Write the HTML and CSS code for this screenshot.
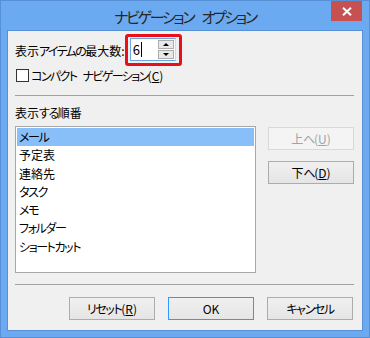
FILE: index.html
```html
<!DOCTYPE html>
<html lang="ja">
<head>
<meta charset="utf-8">
<title>ナビゲーション オプション</title>
<link rel="stylesheet" href="styles.css">
</head>
<body>
<div class="frame">
  <div class="titlebar">
    <div class="title">ナビゲーション オプション</div>
    <div class="close">
      <svg width="10" height="9" viewBox="0 0 10 9"><path d="M1 0.8 L9 8.2 M9 0.8 L1 8.2" stroke="#fff" stroke-width="2" fill="none"/></svg>
    </div>
  </div>
  <div class="client">
    <div class="row-max">
      <span class="label"><span class="k">表示</span>アイテムの<span class="k">最大数:</span></span>
      <div class="highlight">
        <div class="spin">
          <div class="spin-value">6<span class="caret"></span></div>
          <div class="spin-buttons">
            <div class="spin-btn"><span class="tri-up"></span></div>
            <div class="spin-btn"><span class="tri-down"></span></div>
          </div>
        </div>
      </div>
    </div>
    <div class="row-check">
      <span class="checkbox"></span>
      <span class="check-label">コンパクト ナビゲーション<span class="k">(<u>C</u>)</span></span>
    </div>
    <div class="sep sep-top"></div>
    <div class="order-label"><span class="k">表示</span>する<span class="k">順番</span></div>
    <div class="order-row">
      <ul class="list">
        <li class="selected">メール</li>
        <li class="k">予定表</li>
        <li class="k">連絡先</li>
        <li>タスク</li>
        <li>メモ</li>
        <li>フォルダー</li>
        <li>ショートカット</li>
      </ul>
      <div class="side-buttons">
        <div class="btn disabled"><span class="k">上</span>へ<span class="k">(<u>U</u>)</span></div>
        <div class="btn"><span class="k">下</span>へ<span class="k">(<u>D</u>)</span></div>
      </div>
    </div>
    <div class="sep sep-bottom"></div>
    <div class="footer">
      <div class="btn">リセット<span class="k">(<u>R</u>)</span></div>
      <div class="btn default"><span class="k">OK</span></div>
      <div class="btn">キャンセル</div>
    </div>
  </div>
</div>
</body>
</html>
```
FILE: styles.css
```css
html, body {
  margin: 0;
  padding: 0;
}
body {
  width: 370px;
  height: 338px;
  overflow: hidden;
  font-family: "Noto Sans CJK JP", "Noto Sans", sans-serif;
  font-feature-settings: "palt" 1;
  font-size: 12px;
  letter-spacing: -1.4px;
  color: #000;
}
.k {
  letter-spacing: 0;
}
.frame {
  box-sizing: border-box;
  width: 370px;
  height: 338px;
  background: #6baaf0;
  border: 1px solid #5890d6;
  display: flex;
  flex-direction: column;
}
.titlebar {
  height: 30px;
  display: grid;
  grid-template-columns: 1fr auto 1fr;
  padding: 0 7px;
}
.title {
  grid-column: 2;
  align-self: center;
  font-size: 15px;
  letter-spacing: -2.3px;
  word-spacing: 7px;
  line-height: 20px;
  color: #262626;
  padding-top: 1px;
}
.close {
  grid-column: 3;
  justify-self: end;
  align-self: start;
  width: 31px;
  height: 20px;
  background: #c75050;
  display: flex;
  align-items: center;
  justify-content: center;
}
.client {
  flex: 1;
  margin: 0 7px 7px 7px;
  background: #f0f0f0;
  box-shadow: 0 0 0 1px #5890d6;
  padding: 3px 8px 0 7px;
  display: flex;
  flex-direction: column;
}
.row-max {
  display: flex;
  align-items: center;
  height: 32px;
}
.label {
  line-height: 16px;
  padding-top: 1px;
  margin-right: 0;
  letter-spacing: -1.6px;
}
.highlight {
  width: 57px;
  height: 32px;
  box-sizing: border-box;
  border: 3px solid #e8101a;
  border-radius: 3px;
  padding: 1px 0 0 2px;
}
.spin {
  box-sizing: border-box;
  width: 46px;
  height: 23px;
  border: 1px solid #6fa6e0;
  border-right-color: #c8dcf0;
  background: #fff;
  display: flex;
  align-items: center;
}
.spin-value {
  flex: 1;
  padding-left: 2px;
  font-size: 13px;
  line-height: 16px;
  letter-spacing: 0;
  display: flex;
  align-items: center;
}
.caret {
  display: inline-block;
  width: 1px;
  height: 15px;
  background: #000;
  margin-left: 1px;
}
.spin-buttons {
  display: flex;
  flex-direction: column;
  gap: 1px;
  margin-right: 1px;
}
.spin-btn {
  box-sizing: border-box;
  width: 16px;
  height: 9px;
  border: 1px solid #acacac;
  background: #e8e8e8;
  display: flex;
  align-items: center;
  justify-content: center;
}
.tri-up {
  width: 0;
  height: 0;
  border-left: 3px solid transparent;
  border-right: 3px solid transparent;
  border-bottom: 3px solid #000;
}
.tri-down {
  width: 0;
  height: 0;
  border-left: 3px solid transparent;
  border-right: 3px solid transparent;
  border-top: 3px solid #000;
}
.row-check {
  display: flex;
  align-items: center;
  margin-top: 3px;
  height: 13px;
  padding-left: 1px;
}
.checkbox {
  box-sizing: border-box;
  width: 13px;
  height: 13px;
  border: 1px solid #333;
  background: #fff;
  margin-right: 2px;
}
.check-label {
  line-height: 16px;
  letter-spacing: -1.6px;
  word-spacing: 5px;
}
u {
  text-decoration: underline;
  text-underline-offset: 1px;
}
.sep {
  height: 1px;
  background: #a0a0a0;
}
.sep-top {
  margin-top: 13px;
}
.order-label {
  margin-top: 9px;
  line-height: 16px;
}
.order-row {
  margin-top: 5px;
  display: flex;
  gap: 12px;
}
.list {
  box-sizing: border-box;
  list-style: none;
  margin: 0;
  padding: 1px;
  width: 241px;
  height: 147px;
  background: #fff;
  border: 1px solid #a8a8a8;
}
.list li {
  height: 18.3px;
  line-height: 18.3px;
  padding-left: 2px;
}
.list li.selected {
  background: #88bff8;
}
.side-buttons {
  display: flex;
  flex-direction: column;
  gap: 11px;
  padding-top: 1px;
}
.btn {
  box-sizing: border-box;
  width: 86px;
  height: 23px;
  border: 1px solid #acacac;
  background: linear-gradient(#f0f0f0, #e5e5e5);
  display: flex;
  align-items: center;
  justify-content: center;
  line-height: 16px;
}
.btn.disabled {
  border-color: #d9d9d9;
  background: #f4f4f4;
  color: #a3a3a3;
}
.btn.default {
  border-color: #3399ff;
}
.sep-bottom {
  margin-top: 11px;
}
.footer {
  margin-top: 12px;
  display: flex;
  justify-content: flex-end;
  gap: 13px;
  padding-right: 1px;
}
```
